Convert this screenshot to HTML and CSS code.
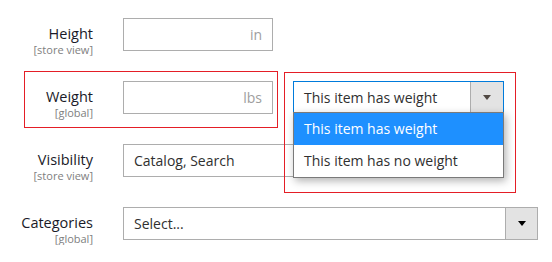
FILE: index.html
```html
<!DOCTYPE html>
<html lang="en">
<head>
    <meta charset="UTF-8">
    <title>Product weight</title>
    <link rel="stylesheet" href="styles.css">
</head>
<body>
    <div class="form">
        <div class="row">
            <div class="label">Height<span class="scope">[store view]</span></div>
            <div class="input short"><span class="addon">in</span></div>
        </div>

        <div class="row">
            <div class="mark mark-row"></div>
            <div class="label">Weight<span class="scope">[global]</span></div>
            <div class="input short"><span class="addon">lbs</span></div>
            <div class="select open">
                <span class="value">This item has weight</span>
                <span class="select-btn"><i class="arrow"></i></span>
                <ul class="options">
                    <li class="selected">This item has weight</li>
                    <li>This item has no weight</li>
                </ul>
                <div class="mark mark-select"></div>
            </div>
        </div>

        <div class="row">
            <div class="label">Visibility<span class="scope">[store view]</span></div>
            <div class="input mid"><span class="value">Catalog, Search</span></div>
        </div>

        <div class="row">
            <div class="label">Categories<span class="scope">[global]</span></div>
            <div class="select wide">
                <span class="value">Select...</span>
                <span class="select-btn"><i class="arrow"></i></span>
            </div>
        </div>
    </div>
</body>
</html>
```

FILE: styles.css
```css
:root {
    --text: #303030;
    --muted: #808080;
    --border: #adadad;
    --focus: #007bdb;
    --mark: #e41e26;
}

body {
    margin: 0;
    background: #fff;
    font-family: 'Open Sans', sans-serif;
    color: var(--text);
}

/* label column is 38px tall, fields 33px: gap keeps a 63px row pitch */
.form {
    display: flex;
    flex-direction: column;
    gap: 25px;
    padding-top: 18px;
}

.row {
    position: relative;
    display: flex;
    align-items: flex-start;
}

.label {
    width: 93px;
    margin-right: 30px;
    padding-top: 7px;
    text-align: right;
    font-size: 14.5px;
    line-height: 18px;
    color: #1a1a28;
}

.scope {
    display: block;
    font-size: 11px;
    line-height: 13px;
    color: var(--muted);
}

.input {
    box-sizing: border-box;
    height: 33px;
    border: 1px solid var(--border);
    padding: 0 10px;
    font-size: 14px;
    line-height: 31px;
}

.input.short { width: 150px; text-align: right; }
.input.mid { width: 300px; }

.addon { color: #9e9e9e; }

.select {
    position: relative;
    box-sizing: border-box;
    display: flex;
    height: 33px;
    border: 1px solid var(--border);
    font-size: 14px;
    line-height: 31px;
}

.select .value {
    flex: 1;
    padding-left: 10px;
}

.select-btn {
    width: 31px;
    background: #e3e3e3;
    border-left: 1px solid var(--border);
    display: flex;
    align-items: center;
    justify-content: center;
}

.arrow {
    width: 0;
    height: 0;
    border-left: 4px solid transparent;
    border-right: 4px solid transparent;
    border-top: 5px solid #000;
}

.select.open {
    width: 211px;
    height: 32px;
    margin-left: 20px;
    border-color: var(--focus);
}

.select.open .select-btn { width: 32px; }
.select.open .arrow { border-top-color: #514943; }

.select.wide { width: 415px; }

.options {
    position: absolute;
    top: 100%;
    left: -1px;
    right: -1px;
    margin: 0;
    padding: 0;
    list-style: none;
    background: #fff;
    border: 1px solid #7a7a7a;
    box-shadow: 2px 3px 8px rgba(0,0,0,0.3);
    z-index: 2;
}

.options li {
    height: 32px;
    line-height: 32px;
    padding-left: 10px;
}

.options .selected {
    background: #1e90ff;
    color: #fff;
}

.mark {
    position: absolute;
    box-sizing: border-box;
    border: 1px solid var(--mark);
    z-index: 3;
}

.mark-row {
    left: 24px;
    top: -10px;
    width: 254px;
    height: 57px;
}

.mark-select {
    left: -10px;
    top: -10px;
    width: 232px;
    height: 121px;
}
```
